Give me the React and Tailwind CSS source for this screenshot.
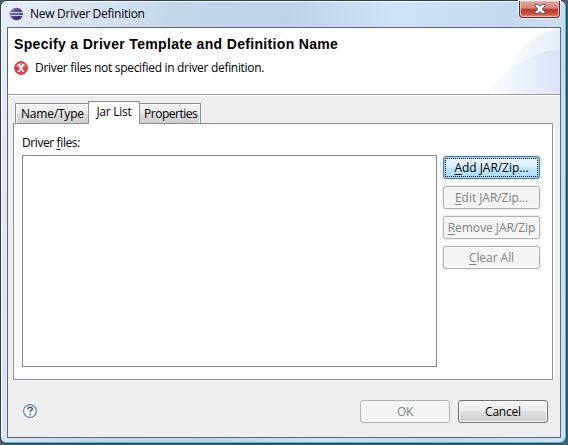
import React from "react";

const uiFont = "font-['Open_Sans','Noto_Sans',sans-serif]";

function EclipseIcon() {
  return (
    <svg width="14" height="14" viewBox="0 0 14 14" className="shrink-0">
      <defs>
        <linearGradient id="orb" x1="0" x2="1" y1="0" y2="1">
          <stop offset="0" stopColor="#8b82b5" />
          <stop offset="0.5" stopColor="#4b4288" />
          <stop offset="1" stopColor="#28205c" />
        </linearGradient>
      </defs>
      <ellipse cx="6" cy="7" rx="6" ry="6" fill="#d6b9b8" />
      <circle cx="7.6" cy="7" r="6.2" fill="url(#orb)" />
      <path d="M1.5 5.5H13.5M2 8.5H13.5" stroke="#c9d3ee" strokeWidth="1" />
      <path d="M1.5 7H13.8" stroke="#6f74ad" strokeWidth="1" />
    </svg>
  );
}

function ErrorIcon() {
  return (
    <svg width="14" height="14" viewBox="0 0 14 14" className="shrink-0">
      <circle cx="7" cy="7" r="6.5" fill="#dc3f49" stroke="#c4535b" />
      <path d="M2 5.5A5.2 5.2 0 0 1 12 5.5Q7 8 2 5.5Z" fill="#ea7b82" />
      <path d="M4.7 3.5L9.3 10.5M9.3 3.5L4.7 10.5" stroke="#fff" strokeWidth="1.5" />
      <path d="M3.5 3.5H5.8M8.2 3.5H10.3M3.5 10.5H5.8M8.2 10.5H10.3" stroke="#fff" strokeWidth="0.8" />
    </svg>
  );
}

function CloseButton() {
  return (
    <button className="mr-px flex h-[17px] w-[41px] items-center justify-center rounded-b-[4px] border border-t-0 border-[#5b2a30] bg-[linear-gradient(#e0a69b_0%,#d5877a_45%,#bd3b29_50%,#c44a36_75%,#dd8d76_100%)] shadow-[inset_0_0_0_1px_#e9b9ae,0_0_0_1px_#e6effa]">
      <svg width="12" height="10" viewBox="0 0 12 10">
        <path d="M1 .5H4.2L6 2.4 7.8.5H11V2L8.3 5 11 8V9.5H7.8L6 7.6 4.2 9.5H1V8L3.7 5 1 2Z" fill="#f7f7f9" stroke="#565468" />
      </svg>
    </button>
  );
}

function HeaderArt() {
  return (
    <svg width="70" height="66" viewBox="0 0 70 66" className="shrink-0">
      <defs>
        <linearGradient id="arcTop" x1="0" x2="1">
          <stop offset="0" stopColor="#fafdff" />
          <stop offset="1" stopColor="#e4ecf6" />
        </linearGradient>
        <linearGradient id="arcLow" x1="0" x2="1">
          <stop offset="0" stopColor="#f8fcff" />
          <stop offset="0.5" stopColor="#e9effa" />
          <stop offset="1" stopColor="#dce2f5" />
        </linearGradient>
      </defs>
      <path d="M14 50Q19 29 38 15 52 4 70 0V66H14Z" fill="url(#arcTop)" />
      <path d="M4 66V57Q17 41 35 32 52 23 70 21V66Z" fill="url(#arcLow)" />
    </svg>
  );
}

function SideButton({ children, active }) {
  return (
    <div className="-ml-px w-[99px] bg-[#f0f0f0] p-px">
      <button
        className={
          "relative block h-[23px] w-[97px] whitespace-nowrap rounded-[3px] border text-center text-[12px] leading-[21px] tracking-[-0.05px]" +
          (active
            ? " border-[#3c7fb1] bg-[linear-gradient(#e9f5fc_0%,#d9effb_48%,#bee6fb_52%,#a8daf5_100%)] text-black shadow-[inset_0_0_0_1px_#9bd7f2]"
            : " border-[#adb2b5] bg-[#f4f4f4] text-[#838383] shadow-[inset_0_0_0_1px_#fafafa]")
        }
      >
        {active && <span className="absolute inset-[1px] border border-dotted border-black" />}
        {children}
      </button>
    </div>
  );
}

const U = ({ children }) => <span className="underline decoration-1 underline-offset-2">{children}</span>;

export default function App() {
  return (
    <div className={"h-[445px] w-[568px] overflow-hidden bg-[#555a62] text-black " + uiFont}>
      <div className="flex h-[444px] w-[567px] flex-col rounded-[7px] border border-[#35404c] bg-[linear-gradient(100deg,#e6edf6_0%,#d3e0ee_18%,#c2d6e9_27%,#bcd3ea_45%,#cce3fa_62%,#c4d9ee_80%,#d3e2f4_100%)] pr-[5px] pl-[6px] shadow-[inset_1px_1px_0_#f5fbff,inset_-1px_-1px_0_#25cdf2]">
        <header className="flex h-[26px] shrink-0 items-start justify-between">
          <div className="flex items-center pt-[3px] pl-[2px]">
            <EclipseIcon />
            <h1 className="ml-[7px] whitespace-nowrap text-[12px] leading-[20px] tracking-[-0.27px]">New Driver Definition</h1>
          </div>
          <CloseButton />
        </header>

        <main className="flex h-[411px] w-[554px] shrink-0 flex-col border border-[#5c6675] bg-[#eeeeee]">
          <section className="flex h-[67px] shrink-0 justify-between border-b border-[#9a9a9a] bg-white">
            <div className="pl-[6px]">
              <h2 className="mt-[7px] whitespace-nowrap font-['Liberation_Sans',Arial,sans-serif] text-[14px] font-bold leading-[18px] tracking-[0.33px]">
                Specify a Driver Template and Definition Name
              </h2>
              <div className="mt-[5px] flex items-center">
                <ErrorIcon />
                <p className="ml-[7px] whitespace-nowrap text-[12px] leading-[20px] tracking-[-0.31px]">
                  Driver files not specified in driver definition.
                </p>
              </div>
            </div>
            <HeaderArt />
          </section>

          <div className="flex h-[28px] shrink-0 items-end border-t border-white pl-[7px] text-[12px]">
            <div className="h-[20px] w-[73px] whitespace-nowrap border border-r-0 border-b-0 border-[#8c8e9a] bg-[linear-gradient(#f2f2f2_0%,#ebebeb_48%,#dddddd_52%,#d0d0d0_100%)] pl-[5px] leading-[20px] tracking-[-0.2px] shadow-[inset_1px_1px_0_#fff]">Name/Type</div>
            <div className="relative z-10 -mb-px h-[23px] w-[52px] whitespace-nowrap border border-b-0 border-[#8c8e9a] bg-white text-center leading-[20px] tracking-[-0.25px]">Jar List</div>
            <div className="h-[20px] w-[61px] whitespace-nowrap border border-l-0 border-b-0 border-[#8c8e9a] bg-[linear-gradient(#f2f2f2_0%,#ebebeb_48%,#dddddd_52%,#d0d0d0_100%)] pl-[4px] leading-[20px] tracking-[-0.48px] shadow-[inset_-1px_1px_0_#fff]">Properties</div>
          </div>

          <section className="ml-[5px] flex h-[257px] w-[540px] shrink-0 flex-col border border-[#8c8e9a] bg-white pl-[8px] shadow-[1px_1px_0_#fff,2px_1px_0_#fff]">
            <div className="mt-[9px] h-[22px] text-[12px] leading-[20px] tracking-[-0.4px]">Driver <U>f</U>iles:</div>
            <div className="flex gap-[6px]">
              <div className="h-[212px] w-[415px] border border-[#828790] bg-white" />
              <div className="flex flex-col gap-[5px]">
                <SideButton active><U>A</U>dd JAR/Zip...</SideButton>
                <SideButton><U>E</U>dit JAR/Zip...</SideButton>
                <SideButton><U>R</U>emove JAR/Zip</SideButton>
                <SideButton><U>C</U>lear All</SideButton>
              </div>
            </div>
          </section>

          <footer className="mt-[20px] flex h-[23px] items-center pr-[12px] pl-[15px]">
            <svg width="14" height="14" viewBox="0 0 14 14" className="mb-px shrink-0">
              <circle cx="7" cy="7" r="6.4" fill="#fafdff" stroke="#60789a" strokeWidth="1.1" />
              <path d="M4.8 5.2Q4.8 3.3 7 3.3T9.3 5Q9.3 6 8 6.7 7 7.2 7 8.4M7 9.7V11.2" fill="none" stroke="#405c82" strokeWidth="1.5" />
            </svg>
            <button className="ml-auto h-[23px] w-[90px] rounded-[3px] border border-[#adb2b5] bg-[#f4f4f4] text-[12px] leading-[21px] tracking-[-0.4px] text-[#838383]">OK</button>
            <button className="ml-[8px] h-[23px] w-[90px] rounded-[3px] border border-[#707070] bg-[linear-gradient(#f2f2f2_0%,#ebebeb_48%,#dddddd_52%,#cfcfcf_100%)] text-[12px] leading-[21px] tracking-[-0.2px] shadow-[inset_0_0_0_1px_#fbfbfb]">Cancel</button>
          </footer>
        </main>
      </div>
    </div>
  );
}
